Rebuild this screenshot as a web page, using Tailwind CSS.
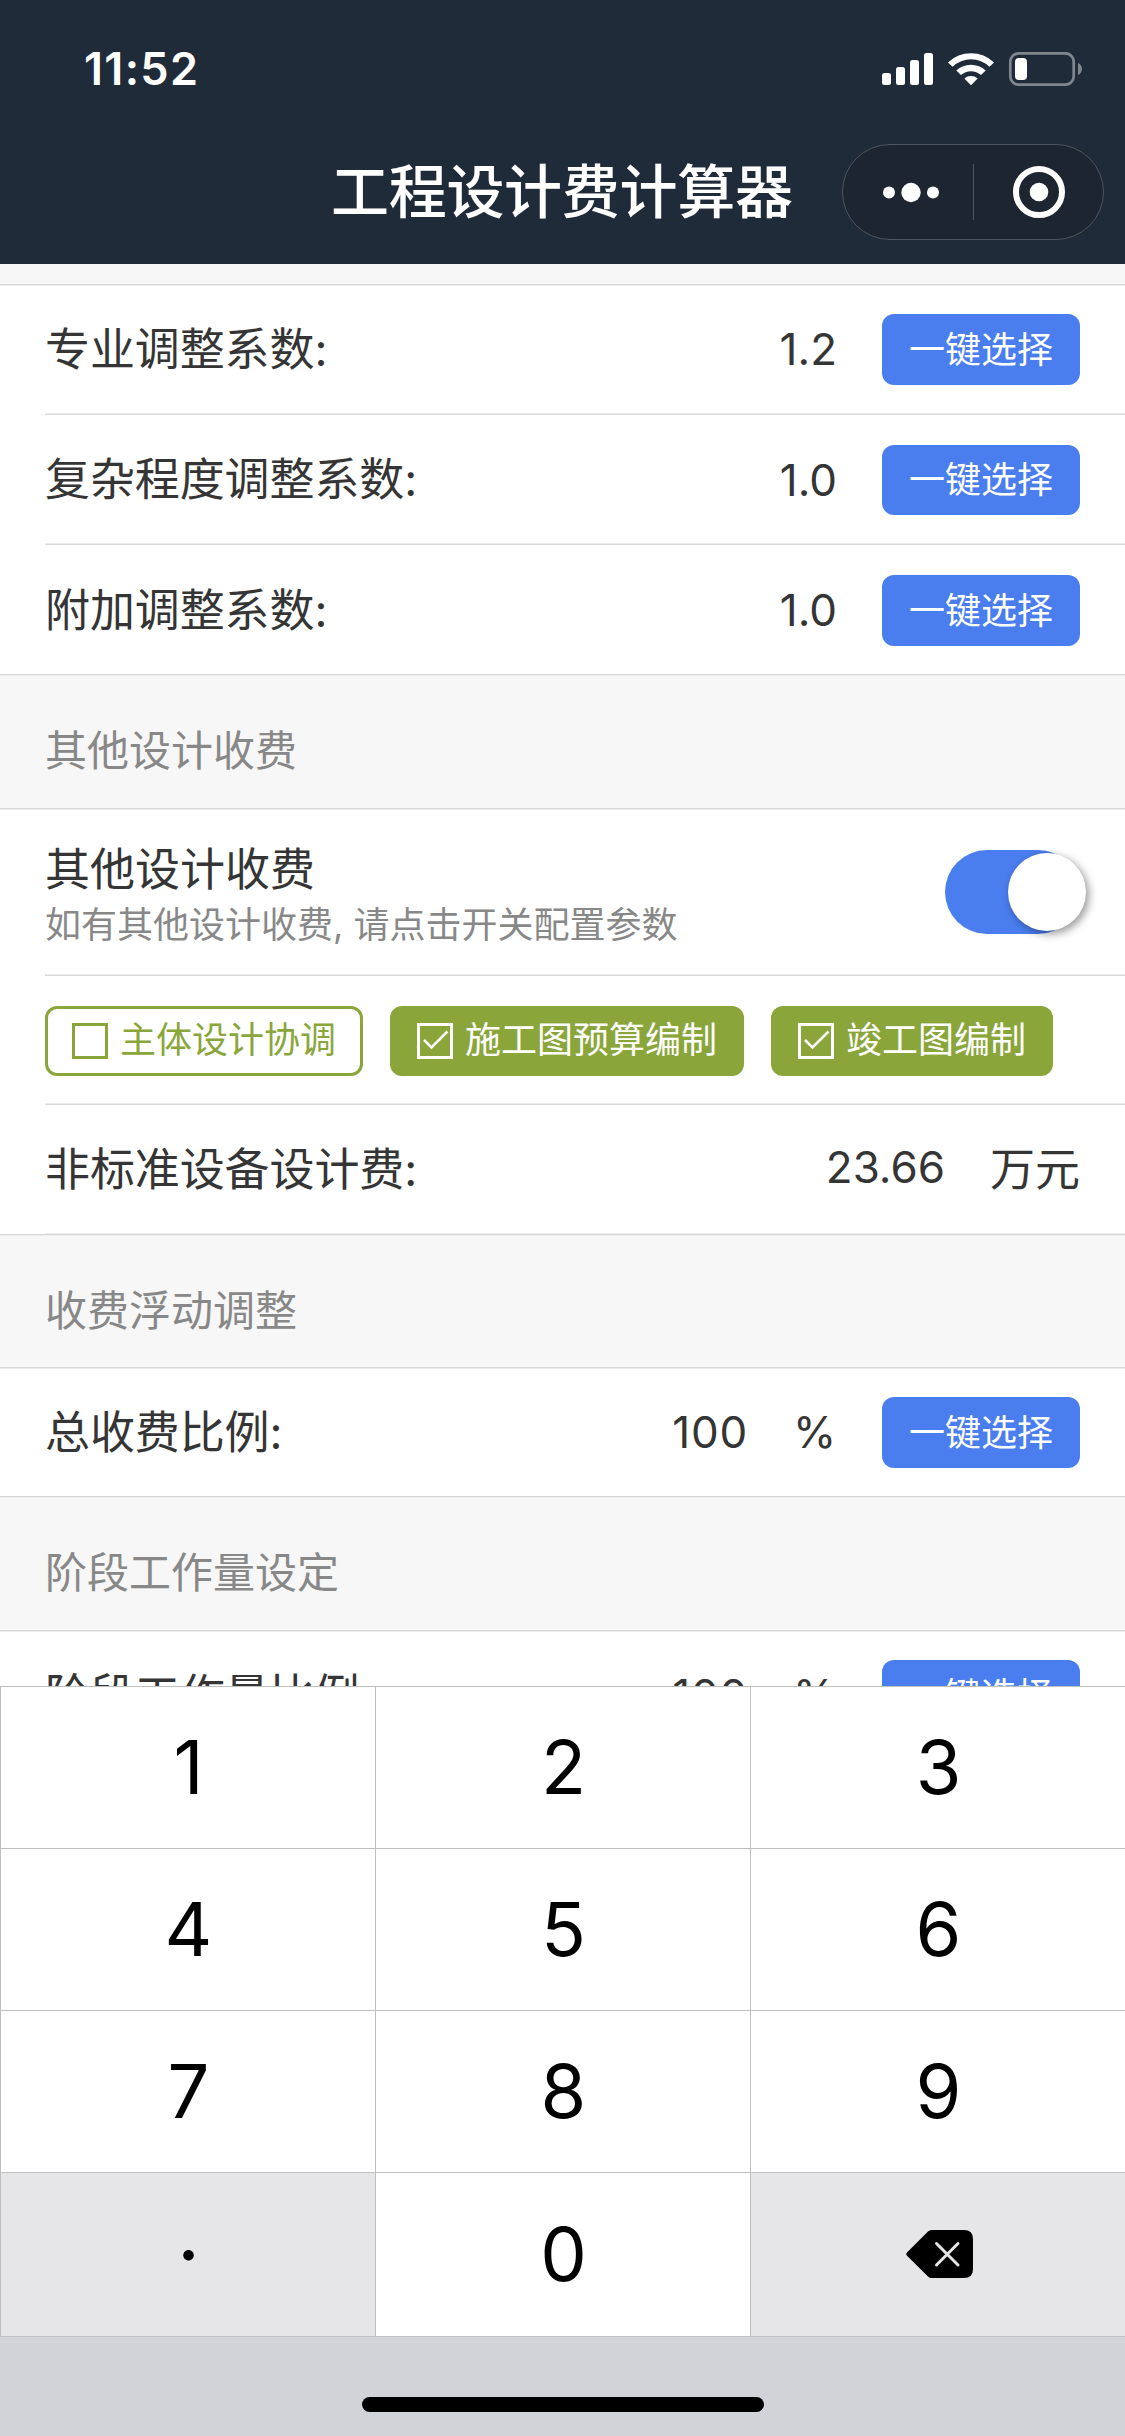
<!DOCTYPE html>
<html lang="zh-CN">
<head>
<meta charset="utf-8">
<title>工程设计费计算器</title>
<script src="https://cdn.jsdelivr.net/npm/@tailwindcss/browser@4"></script>
</head>
<body class="w-[1125px] h-[2436px] overflow-hidden flex flex-col bg-white text-[#353535] text-[45px] leading-[60px] font-['Inter','Noto_Sans_CJK_SC',sans-serif]">

<header class="h-[264px] shrink-0 bg-[#202b3a] text-white flex flex-col">
  <div class="h-[138px] flex items-center justify-between pl-[84px] pr-[43px]">
    <div class="text-[45px] font-semibold tracking-[1.3px]">11:52</div>
    <svg class="w-[200px] h-[34px]" viewBox="882 52 200 34" fill="#fff">
      <rect x="882" y="73" width="9" height="12" rx="2.5"/>
      <rect x="896" y="67" width="9" height="18" rx="2.5"/>
      <rect x="910" y="60" width="9" height="25" rx="2.5"/>
      <rect x="924" y="53" width="9" height="32" rx="2.5"/>
      <path d="M948 62.5a33 33 0 0 1 46 0l-4.6 4.2a26.5 26.5 0 0 0-36.8 0z"/>
      <path d="M956.3 70.6a21.5 21.5 0 0 1 29.4 0l-4.7 4.4a15 15 0 0 0-20 0z"/>
      <path d="M964.3 78.4a10.5 10.5 0 0 1 13.4 0L971 85.3z"/>
      <rect x="1010.3" y="53.3" width="63.4" height="31.4" rx="8.5" fill="none" stroke="#7f868e" stroke-width="2.7"/>
      <path d="M1078 63c5.300 2 5.300 10 0 12z" fill="#7f868e"/>
      <rect x="1015" y="58" width="12" height="22" rx="4"/>
    </svg>
  </div>
  <div class="h-[108px] flex items-center pl-[331px] pr-[21px] justify-between">
    <h1 class="text-[58px] tracking-[-0.3px] leading-[80px] font-medium whitespace-nowrap">工程设计费计算器</h1>
    <div class="w-[262px] h-[96px] rounded-full border border-[#4d565f] bg-[#1c2530] flex items-center">
      <svg class="w-full h-full" viewBox="843 145 260 94" fill="#fff">
        <circle cx="889" cy="192.500" r="6"/><circle cx="911" cy="192.500" r="9.700"/><circle cx="933" cy="192.500" r="6"/>
        <rect x="973" y="164" width="1" height="56" fill="#4d565f"/>
        <circle cx="1039" cy="192" r="23" fill="none" stroke="#fff" stroke-width="6"/><circle cx="1039" cy="192" r="9.300"/>
      </svg>
    </div>
  </div>
</header>

<main class="h-[1422px] shrink-0 overflow-hidden flex flex-col *:shrink-0">
  <div class="h-5 bg-[#f7f7f7]"></div>
  <div class="h-[2px] border-t border-[#d8d8d8] bg-[#ececec]"></div>

  <div class="h-[127px] flex items-center px-[45px]">
    <span class="flex-1 tracking-[-0.1px]">专业调整系数:</span>
    <span class="text-[44px] mr-[45px] -mt-px">1.2</span>
    <button class="w-[198px] h-[71px] rounded-[12px] bg-[#4a7dee] text-white text-[36px]">一键选择</button>
  </div>
  <div class="h-[2px] ml-[45px] border-b border-[#d8d8d8] bg-[#ececec]"></div>
  <div class="h-[128px] flex items-center px-[45px] pt-px">
    <span class="flex-1 tracking-[-0.1px]">复杂程度调整系数:</span>
    <span class="text-[44px] mr-[45px]">1.0</span>
    <button class="w-[198px] h-[70px] rounded-[12px] bg-[#4a7dee] text-white text-[36px]">一键选择</button>
  </div>
  <div class="h-[2px] ml-[45px] border-b border-[#d8d8d8] bg-[#ececec]"></div>
  <div class="h-[129px] flex items-center px-[45px] pt-[2px]">
    <span class="flex-1 tracking-[-0.1px]">附加调整系数:</span>
    <span class="text-[44px] mr-[45px] -mt-px">1.0</span>
    <button class="w-[198px] h-[71px] rounded-[12px] bg-[#4a7dee] text-white text-[36px]">一键选择</button>
  </div>
  <div class="h-[2px] border-t border-[#d8d8d8] bg-[#ececec]"></div>

  <h2 class="h-[132px] bg-[#f7f7f7] px-[45px] pt-[18px] flex items-center text-[42px] text-[#888]">其他设计收费</h2>
  <div class="h-[2px] border-t border-[#d8d8d8] bg-[#ececec]"></div>

  <div class="h-[164px] flex items-center justify-between px-[45px]">
    <div class="flex flex-col pt-[6px]">
      <span class="leading-[60px]">其他设计收费</span>
      <span class="text-[36px] leading-[50px] text-[#888]">如有其他设计收费, 请点击开关配置参数</span>
    </div>
    <div class="w-[135px] h-[84px] rounded-full bg-[#4a7dee] flex items-center">
      <div class="w-[78px] h-[78px] shrink-0 ml-[63px] rounded-full bg-white shadow-[3px_3px_9px_rgba(0,0,0,0.4)]"></div>
    </div>
  </div>
  <div class="h-[2px] ml-[45px] border-b border-[#d8d8d8] bg-[#ececec]"></div>

  <div class="h-[127px] flex items-center gap-[27px] px-[45px] pt-[3px] text-[36px]">
    <button class="w-[318px] h-[70px] rounded-[12px] border-[3px] border-[#8aa63a] text-[#8aa63a] flex items-center pl-6 gap-3 whitespace-nowrap">
      <span class="w-9 h-9 border-[3px] border-current"></span><span class="-mt-[2px]">主体设计协调</span>
    </button>
    <button class="w-[354px] h-[70px] rounded-[12px] bg-[#8aa63a] text-white flex items-center pl-[27px] gap-3 whitespace-nowrap">
      <svg class="w-9 h-9" viewBox="0 0 36 36" fill="none" stroke="#fff"><rect x="1.500" y="1.500" width="33" height="33" stroke-width="3"/><path d="M7 17l7.500 7.500L30.500 8.500" stroke-width="2.500"/></svg>
      <span class="-mt-[2px]">施工图预算编制</span>
    </button>
    <button class="w-[282px] h-[70px] rounded-[12px] bg-[#8aa63a] text-white flex items-center pl-[27px] gap-3 whitespace-nowrap">
      <svg class="w-9 h-9" viewBox="0 0 36 36" fill="none" stroke="#fff"><rect x="1.500" y="1.500" width="33" height="33" stroke-width="3"/><path d="M7 17l7.500 7.500L30.500 8.500" stroke-width="2.500"/></svg>
      <span class="-mt-[2px]">竣工图编制</span>
    </button>
  </div>
  <div class="h-[2px] ml-[45px] border-b border-[#d8d8d8] bg-[#ececec]"></div>

  <div class="h-[128px] flex items-center px-[45px]">
    <span class="flex-1 tracking-[-0.1px] pt-px">非标准设备设计费:</span>
    <span class="text-[44px] mr-[45px] -mt-[5px]">23.66</span>
    <span class="pt-px">万元</span>
  </div>
  <div class="h-px ml-[45px] bg-[#ececec]"></div>
  <div class="h-[2px] border-t border-[#d8d8d8] bg-[#ececec]"></div>

  <h2 class="h-[131px] bg-[#f7f7f7] px-[45px] pt-[18px] flex items-center text-[42px] text-[#888]">收费浮动调整</h2>
  <div class="h-[2px] border-t border-[#d8d8d8] bg-[#ececec]"></div>
  <div class="h-[127px] flex items-center px-[45px]">
    <span class="flex-1 tracking-[-0.1px]">总收费比例:</span>
    <span class="text-[44px] tracking-[0.8px] mr-[45px] -mt-px">100</span>
    <span class="text-[44px] mr-[45px] w-[44px] -mt-px tracking-[-1px]">%</span>
    <button class="w-[198px] h-[71px] rounded-[12px] bg-[#4a7dee] text-white text-[36px]">一键选择</button>
  </div>
  <div class="h-[2px] border-t border-[#d8d8d8] bg-[#ececec]"></div>

  <h2 class="h-[132px] bg-[#f7f7f7] px-[45px] pt-[18px] flex items-center text-[42px] text-[#888]">阶段工作量设定</h2>
  <div class="h-[2px] border-t border-[#d8d8d8] bg-[#ececec]"></div>
  <div class="h-[127px] flex items-center px-[45px]">
    <span class="flex-1 tracking-[-0.1px]">阶段工作量比例:</span>
    <span class="text-[44px] tracking-[0.8px] mr-[45px] -mt-px">100</span>
    <span class="text-[44px] mr-[45px] w-[44px] -mt-px tracking-[-1px]">%</span>
    <button class="w-[198px] h-[71px] rounded-[12px] bg-[#4a7dee] text-white text-[36px]">一键选择</button>
  </div>
</main>

<section class="grow bg-[#d2d3d8] flex flex-col">
  <div class="h-[651px] grid grid-cols-3 grid-rows-[162px_162px_162px_164px] border-b border-[#bfc0c4] text-black text-[74px] leading-[80px] *:border-t *:border-l *:border-[#bfbfbf] *:flex *:items-center *:justify-center *:pl-px *:pb-[2px]">
    <div class="bg-white">1</div><div class="bg-white">2</div><div class="bg-white">3</div>
    <div class="bg-white">4</div><div class="bg-white">5</div><div class="bg-white">6</div>
    <div class="bg-white">7</div><div class="bg-white">8</div><div class="bg-white">9</div>
    <div class="bg-[#e6e6e8] text-[80px]">·</div>
    <div class="bg-white">0</div>
    <div class="bg-[#e6e6e8]">
      <svg class="w-[68px] h-[48px] ml-[2px]" viewBox="0 0 68 48"><path d="M1 22.500L22 1.500Q23.500 0 25.500 0H58Q67 0 67 9V39Q67 48 58 48H25.500Q23.500 48 22 46.500L1 25.800Q-.5 24.200 1 22.500z"/><path d="M30.500 13.500L52 35M52 13.500L30.500 35" stroke="#e6e6e8" stroke-width="3" stroke-linecap="round"/></svg>
    </div>
  </div>
  <div class="flex justify-center pt-[60px]"><div class="w-[402px] h-[15px] rounded-full bg-black"></div></div>
</section>
</body>
</html>
